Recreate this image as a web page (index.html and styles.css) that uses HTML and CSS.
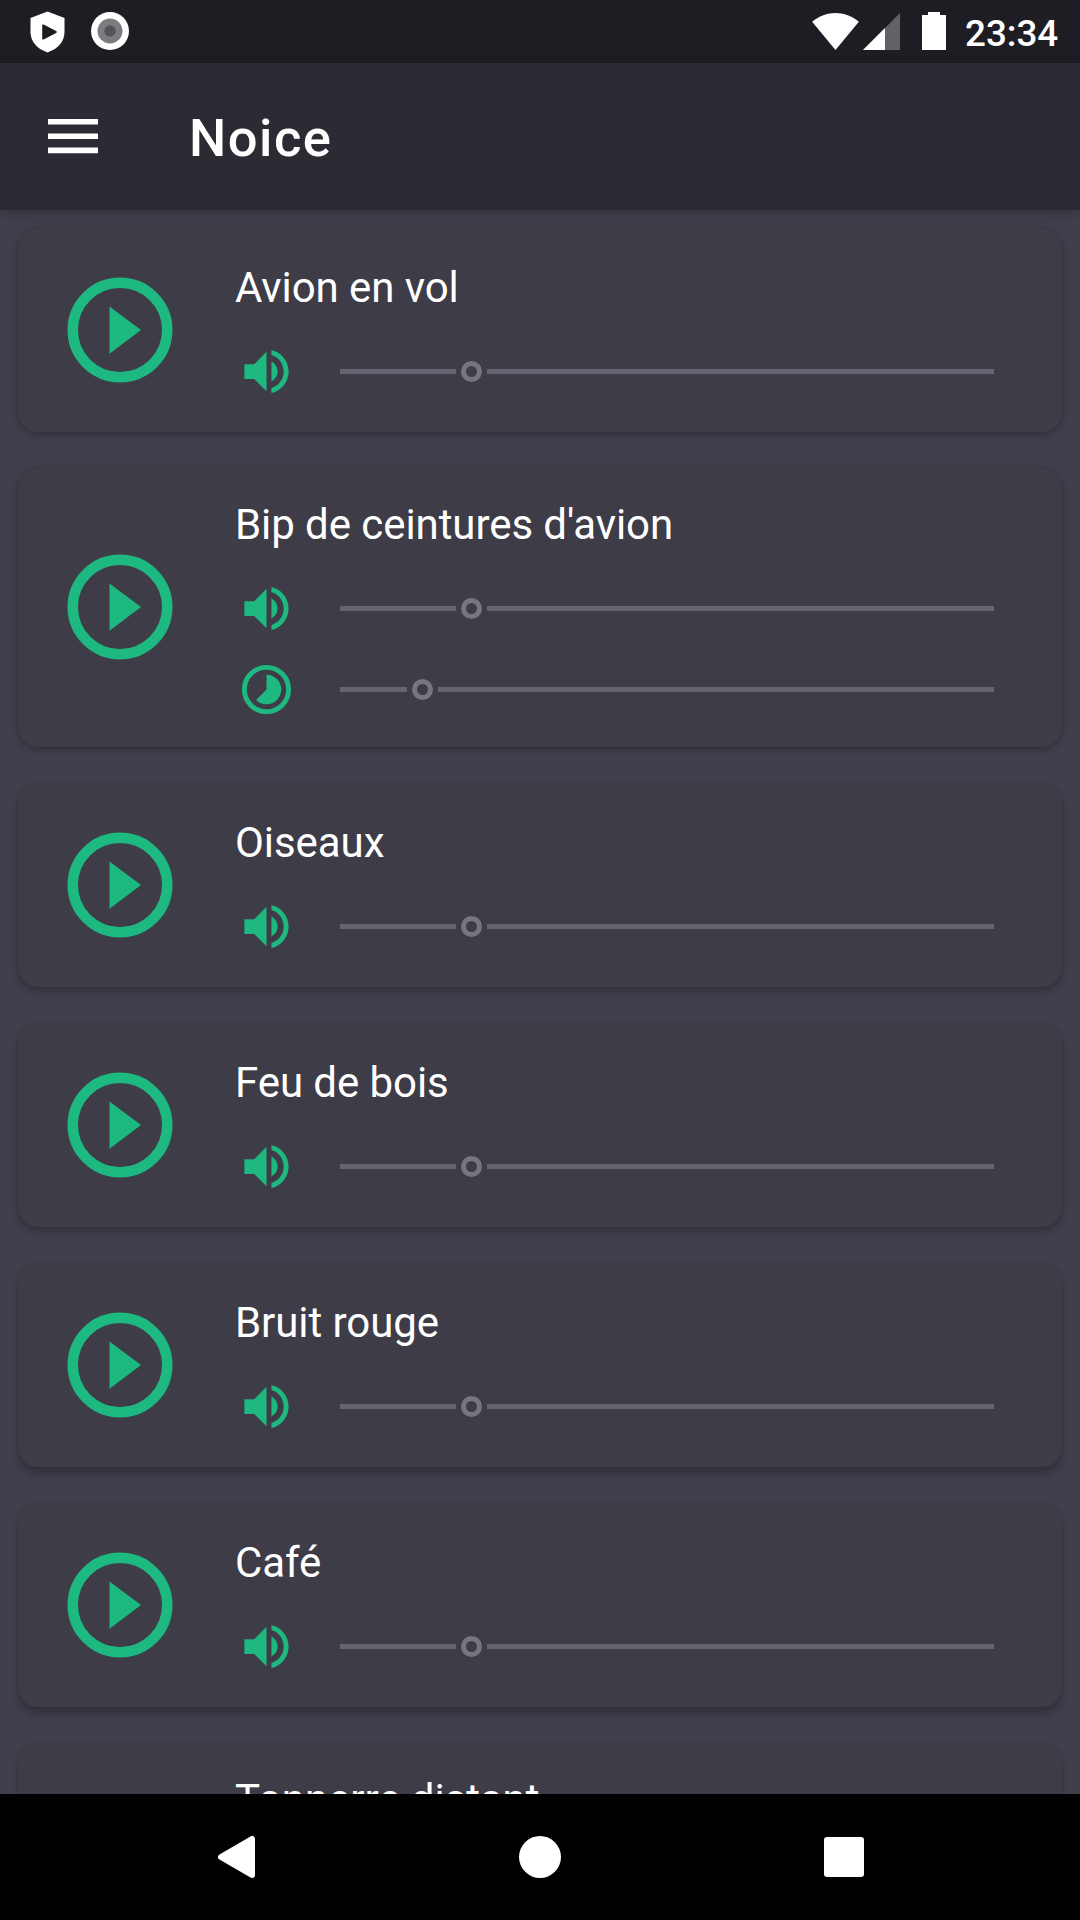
FILE: index.html
```
<!DOCTYPE html>
<html lang="fr">
<head>
<meta charset="utf-8">
<title>Noice</title>
<link rel="stylesheet" href="styles.css">
</head>
<body>
<svg class="defs" width="0" height="0">
  <symbol id="play" viewBox="0 0 24 24"><circle cx="12" cy="12" r="9" fill="none" stroke="currentColor" stroke-width="2"/><path d="M10 16.5l6-4.5-6-4.5z" fill="currentColor"/></symbol>
  <symbol id="volume" viewBox="0 0 24 24"><path fill="currentColor" d="M3 9v6h4l5 5V4L7 9H3zm13.5 3c0-1.77-1.02-3.29-2.5-4.03v8.05c1.48-.73 2.5-2.25 2.5-4.02zM14 3.23v2.06c2.89.86 5 3.54 5 6.71s-2.11 5.85-5 6.71v2.06c4.01-.91 7-4.49 7-8.77s-2.99-7.86-7-8.77z"/></symbol>
  <symbol id="interval" viewBox="0 0 24 24"><circle cx="12" cy="12" r="9" fill="none" stroke="currentColor" stroke-width="2"/><path fill="currentColor" d="M16.24 7.76C15.07 6.59 13.54 6 12 6v6l-4.24 4.24c2.34 2.34 6.14 2.34 8.49 0 2.34-2.34 2.34-6.14-.01-8.48z"/></symbol>
</svg>
<div class="screen">
  <header class="status">
    <svg class="shield" viewBox="0 0 35 42"><path fill="#fff" d="M17.5.5L34.5 7v14c0 9-6 16.500-17 20.500C6.500 37.500.5 30 .5 21V7z"/><path class="shield-play" d="M13.200 14.500l12.500 6.500-12.500 6.500z"/></svg>
    <svg class="record" viewBox="0 0 38 38"><circle cx="19" cy="19" r="19" fill="#fff"/><circle cx="19" cy="19" r="12.500" fill="#7c7b7f"/><circle cx="19" cy="19" r="5.700" fill="#545358"/></svg>
    <span class="spacer"></span>
    <svg class="wifi" viewBox="0 0 48 38"><path fill="#fff" d="M0 9C14-3 34-3 48 9L24 38z"/></svg>
    <svg class="signal" viewBox="0 0 37 37"><path fill="#626166" d="M37 0v37H0z"/><path fill="#fff" d="M22 15v22H0z"/></svg>
    <svg class="battery" viewBox="0 0 24 38"><path fill="#fff" d="M6 0h12v3h6v35H0V3h6z"/></svg>
    <span class="clock">23:34</span>
  </header>
  <div class="appbar">
    <svg class="menu" viewBox="0 0 50 35"><path fill="#fff" d="M0 0h50v5.600H0zM0 14.400h50V20H0zM0 28.600h50v5.600H0z"/></svg>
    <h1 class="title">Noice</h1>
  </div>
  <main class="list">
    <section class="card">
      <svg class="play"><use href="#play"/></svg>
      <div class="info"><h2 class="name">Avion en vol</h2>
        <div class="row"><svg class="icon"><use href="#volume"/></svg><div class="slider"><i class="track" style="width:116px"></i><i class="thumb"></i><i class="track rest"></i></div></div>
      </div>
    </section>
    <section class="card card-double">
      <svg class="play"><use href="#play"/></svg>
      <div class="info"><h2 class="name">Bip de ceintures d'avion</h2>
        <div class="row"><svg class="icon"><use href="#volume"/></svg><div class="slider"><i class="track" style="width:116px"></i><i class="thumb"></i><i class="track rest"></i></div></div>
        <div class="row"><svg class="icon"><use href="#interval"/></svg><div class="slider"><i class="track" style="width:67px"></i><i class="thumb"></i><i class="track rest"></i></div></div>
      </div>
    </section>
    <section class="card">
      <svg class="play"><use href="#play"/></svg>
      <div class="info"><h2 class="name">Oiseaux</h2>
        <div class="row"><svg class="icon"><use href="#volume"/></svg><div class="slider"><i class="track" style="width:116px"></i><i class="thumb"></i><i class="track rest"></i></div></div>
      </div>
    </section>
    <section class="card">
      <svg class="play"><use href="#play"/></svg>
      <div class="info"><h2 class="name">Feu de bois</h2>
        <div class="row"><svg class="icon"><use href="#volume"/></svg><div class="slider"><i class="track" style="width:116px"></i><i class="thumb"></i><i class="track rest"></i></div></div>
      </div>
    </section>
    <section class="card">
      <svg class="play"><use href="#play"/></svg>
      <div class="info"><h2 class="name">Bruit rouge</h2>
        <div class="row"><svg class="icon"><use href="#volume"/></svg><div class="slider"><i class="track" style="width:116px"></i><i class="thumb"></i><i class="track rest"></i></div></div>
      </div>
    </section>
    <section class="card">
      <svg class="play"><use href="#play"/></svg>
      <div class="info"><h2 class="name">Café</h2>
        <div class="row"><svg class="icon"><use href="#volume"/></svg><div class="slider"><i class="track" style="width:116px"></i><i class="thumb"></i><i class="track rest"></i></div></div>
      </div>
    </section>
    <section class="card card-double">
      <div class="play"></div>
      <div class="info"><h2 class="name">Tonnerre distant</h2></div>
    </section>
  </main>
  <nav class="nav">
    <svg viewBox="0 0 48 48"><path fill="#fff" stroke="#fff" stroke-width="6" stroke-linejoin="round" d="M9 24L40 6v36z"/></svg>
    <svg viewBox="0 0 48 48"><circle cx="24" cy="24" r="21" fill="#fff"/></svg>
    <svg viewBox="0 0 48 48"><rect x="4" y="4" width="40" height="40" rx="3" fill="#fff"/></svg>
  </nav>
</div>
</body>
</html>
```
FILE: styles.css
```
* { box-sizing: border-box; }
body { margin: 0; background: #403f4c; font-family: Roboto, "Noto Sans", sans-serif; color: #fff; }
svg { display: block; flex: none; }
h1, h2 { margin: 0; }
.defs { position: absolute; }
.screen { display: flex; flex-direction: column; width: 1080px; height: 1920px; overflow: hidden; }

.status { display: flex; flex: none; height: 63px; background: #1e1d23; padding: 0 20px 0 30px; }
.shield { width: 35px; height: 42px; margin-top: 10.500px; }
.shield-play { fill: #1e1d23; stroke: #1e1d23; stroke-width: 2; stroke-linejoin: round; }
.record { width: 38px; height: 38px; margin: 12.400px 0 0 26.400px; }
.spacer { flex: 1; }
.wifi { width: 47px; height: 37px; margin-top: 13px; }
.signal { width: 37px; height: 37px; margin: 13px 0 0 4px; }
.battery { width: 24px; height: 38px; margin: 12px 0 0 22px; }
.clock { width: 95px; margin: 12px 0 0 19px; font-size: 36.750px; line-height: 43px; font-weight: 500; white-space: nowrap; }

.appbar { display: flex; flex: none; align-items: center; height: 147px; padding-left: 48px; background: #2c2b33; position: relative; z-index: 1; box-shadow: 0 3px 10px rgba(0, 0, 0, .22); }
.menu { width: 50px; height: 35px; margin-top: -1px; }
.title { margin: 3px 0 0 91px; font-size: 52.500px; line-height: 62px; font-weight: 500; letter-spacing: 1.500px; }

.list { flex: 1; min-height: 0; overflow: hidden; display: flex; flex-direction: column; gap: 36px; padding: 18px 18px 0; }
.card { display: flex; flex: none; height: 204px; padding: 35px 68px 0 39px; border-radius: 20px; background: #3d3c47; box-shadow: 0 3px 8px rgba(0, 0, 0, .22), 0 0 3px rgba(0, 0, 0, .12); }
.card-double { height: 279px; padding-top: 32px; }
.card:nth-child(n+3) { box-shadow: 0 5px 8px rgba(0, 0, 0, .22), 0 0 3px rgba(0, 0, 0, .1); }
.card:nth-child(n+5) { box-shadow: 0 8px 8px rgba(0, 0, 0, .22), 0 0 3px rgba(0, 0, 0, .08); }
.play { width: 126px; height: 126px; margin-top: 4px; color: #1eb980; }
.card-double .play { margin-top: 44px; }
.info { flex: 1; margin-left: 52px; }
.name { height: 68px; font-size: 42px; line-height: 49px; font-weight: 400; letter-spacing: -.070px; white-space: nowrap; }
.row { display: flex; align-items: center; height: 81px; }
.icon { width: 59px; height: 59px; margin: 0 44px 0 2px; color: #1eb980; }
.slider { display: flex; flex: 1; align-items: center; }
.track { flex: none; height: 5px; background: #656470; }
.rest { flex: 1; }
.thumb { flex: none; width: 21px; height: 21px; margin: 0 5px; border: 5px solid #777680; border-radius: 50%; }

.nav { display: flex; flex: none; align-items: center; justify-content: center; gap: 256px; height: 126px; background: #000; }
.nav svg { width: 48px; height: 48px; }
```
